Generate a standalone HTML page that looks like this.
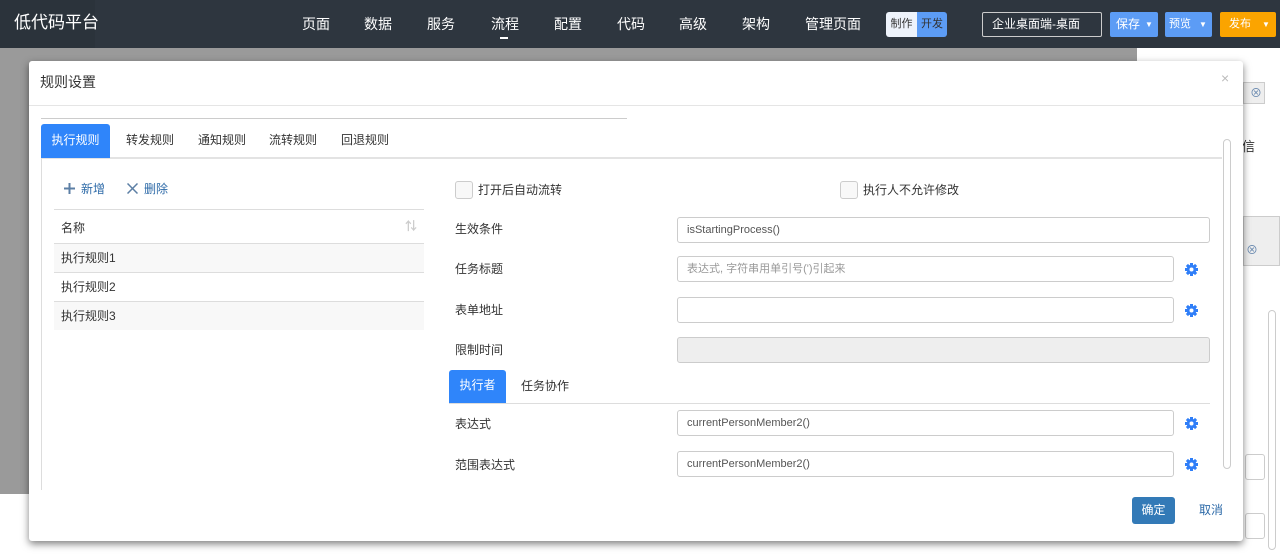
<!DOCTYPE html>
<html><head><meta charset="utf-8"><style>
*{box-sizing:border-box;margin:0;padding:0}
body{width:1280px;height:556px;overflow:hidden;position:relative;background:#fff;font-family:"Liberation Sans","Noto Sans CJK SC",sans-serif;font-size:12px;color:#333;line-height:1.2}
.abs{position:absolute;white-space:nowrap}
.top{left:0;top:0;width:1280px;height:48px;background:#2e363f}
.logo{left:0;top:0;width:95px;height:48px;background:#2b333b;color:#fff;font-size:17px;line-height:46px;padding-left:14px}
.nav{top:0;color:#fff;font-size:14px;line-height:48px}
.gray{left:0;top:48px;width:1137px;height:446px;background:#9a9a9a}
.modal{left:29px;top:61px;width:1214px;height:480px;background:#fff;border-radius:3px;box-shadow:0 3px 8px rgba(0,0,0,.5)}
.inp{border:1px solid #ccc;border-radius:3px;height:26px;background:#fff;font-size:11px;line-height:24px;padding-left:9px;color:#555}
.cb{width:18px;height:18px;border:1px solid #ccc;border-radius:3px;background:#f8f8f8}
.g{position:absolute;width:13px;height:13px}
</style></head><body>
<svg width="0" height="0" style="position:absolute"><defs><g id="gear"><g fill="#2f7ef8"><rect x="5" y="0" width="3" height="13"/><rect x="0" y="5" width="13" height="3"/><rect x="5" y="0" width="3" height="13" transform="rotate(45 6.5 6.5)"/><rect x="5" y="0" width="3" height="13" transform="rotate(-45 6.5 6.5)"/><circle cx="6.5" cy="6.5" r="4.8"/></g><circle cx="6.5" cy="6.5" r="2" fill="#fff"/></g></defs></svg>
<div class="abs top"></div>
<div class="abs logo">低代码平台</div>
<div class="abs nav" style="left:302px">页面</div>
<div class="abs nav" style="left:364px">数据</div>
<div class="abs nav" style="left:427px">服务</div>
<div class="abs nav" style="left:491px">流程</div>
<div class="abs" style="left:500px;top:37px;width:8px;height:2px;background:#fff"></div>
<div class="abs nav" style="left:554px">配置</div>
<div class="abs nav" style="left:617px">代码</div>
<div class="abs nav" style="left:679px">高级</div>
<div class="abs nav" style="left:742px">架构</div>
<div class="abs nav" style="left:805px">管理页面</div>
<div class="abs" style="left:886px;top:12px;width:31px;height:25px;background:#eef3fb;border-radius:3px 0 0 3px;color:#333;font-size:11px;line-height:25px;text-align:center">制作</div>
<div class="abs" style="left:917px;top:12px;width:30px;height:25px;background:#5c9cf5;border-radius:0 3px 3px 0;color:#333;font-size:11px;line-height:25px;text-align:center">开发</div>
<div class="abs" style="left:982px;top:12px;width:120px;height:25px;border:1px solid #ccc;border-radius:2px;color:#fff;font-size:12px;line-height:23px;padding-left:9px">企业桌面端-桌面</div>
<div class="abs" style="left:1110px;top:12px;width:48px;height:25px;background:#5c9cf5;border-radius:2px;color:#fff;font-size:12px;line-height:25px;padding-left:6px">保存<span style="position:absolute;left:35px;font-size:8px">▼</span></div>
<div class="abs" style="left:1165px;top:12px;width:47px;height:25px;background:#5c9cf5;border-radius:2px;color:#fff;font-size:11px;line-height:25px;padding-left:4px">预览<span style="position:absolute;left:34px;font-size:8px">▼</span></div>
<div class="abs" style="left:1220px;top:12px;width:56px;height:25px;background:#fba400;border-radius:2px;color:#fff;font-size:11px;line-height:25px;padding-left:9px">发布<span style="position:absolute;left:42px;font-size:8px">▼</span></div>
<div class="abs gray"></div>
<div class="abs" style="left:1243px;top:82px;width:22px;height:22px;border:1px solid #ccc;background:#eee;color:#6a8ab0;font-size:12px;line-height:20px;text-align:right;padding-right:2px">⊗</div>
<div class="abs" style="left:1242px;top:139px;font-size:13px">信</div>
<div class="abs" style="left:1243px;top:216px;width:37px;height:50px;border:1px solid #ccc;background:#eee;color:#6a8ab0;font-size:12px;padding-top:26px;padding-left:2px">⊗</div>
<div class="abs" style="left:1245px;top:454px;width:20px;height:26px;border:1px solid #ccc;border-radius:3px"></div>
<div class="abs" style="left:1245px;top:513px;width:20px;height:26px;border:1px solid #ccc;border-radius:3px"></div>
<div class="abs" style="left:1268px;top:310px;width:8px;height:240px;border:1px solid #ccc;border-radius:4px"></div>

<div class="abs modal"></div>
<div class="abs" style="left:40px;top:74px;font-size:14px;color:#333">规则设置</div>
<div class="abs" style="left:1221px;top:70px;font-size:14px;color:#bbb">×</div>
<div class="abs" style="left:29px;top:105px;width:1214px;height:1px;background:#e5e5e5"></div>
<div class="abs" style="left:41px;top:118px;width:586px;height:1px;background:#ccc"></div>
<div class="abs" style="left:41px;top:157px;width:1181px;height:2px;background:#e3e3e3"></div>
<div class="abs" style="left:41px;top:124px;width:69px;height:34px;background:#2f85fa;border-radius:3px 3px 0 0;color:#fff;line-height:32px;text-align:center">执行规则</div>
<div class="abs" style="left:126px;top:133px">转发规则</div>
<div class="abs" style="left:198px;top:133px">通知规则</div>
<div class="abs" style="left:269px;top:133px">流转规则</div>
<div class="abs" style="left:341px;top:133px">回退规则</div>
<div class="abs" style="left:41px;top:158px;width:1px;height:332px;background:#ddd"></div>
<div class="abs" style="left:1223px;top:139px;width:8px;height:330px;border:1px solid #ccc;border-radius:4px"></div>

<svg class="abs" style="left:64px;top:183px" width="11" height="11"><path d="M5.5 0V11M0 5.5H11" stroke="#5c7fa5" stroke-width="2"/></svg>
<div class="abs" style="left:81px;top:182px;color:#2d6aa8">新增</div>
<svg class="abs" style="left:127px;top:183px" width="11" height="11"><path d="M0.5 0.5L10.5 10.5M10.5 0.5L0.5 10.5" stroke="#5c7fa5" stroke-width="1.5"/></svg>
<div class="abs" style="left:144px;top:182px;color:#2d6aa8">删除</div>
<div class="abs" style="left:54px;top:209px;width:370px;height:1px;background:#ddd"></div>
<div class="abs" style="left:61px;top:221px">名称</div>
<div class="abs" style="left:405px;top:219px;color:#ccc;font-size:12px;font-weight:bold">⇅</div>
<div class="abs" style="left:54px;top:243px;width:370px;height:30px;background:#f8f8f8;border-top:1px solid #ddd;padding:7px 7px">执行规则1</div>
<div class="abs" style="left:54px;top:272px;width:370px;height:30px;background:#fff;border-top:1px solid #ddd;padding:7px 7px">执行规则2</div>
<div class="abs" style="left:54px;top:301px;width:370px;height:29px;background:#f8f8f8;border-top:1px solid #ddd;padding:7px 7px">执行规则3</div>

<div class="abs cb" style="left:455px;top:181px"></div>
<div class="abs" style="left:478px;top:183px">打开后自动流转</div>
<div class="abs cb" style="left:840px;top:181px"></div>
<div class="abs" style="left:863px;top:183px">执行人不允许修改</div>

<div class="abs" style="left:455px;top:222px">生效条件</div>
<div class="abs inp" style="left:677px;top:217px;width:533px">isStartingProcess()</div>
<div class="abs" style="left:455px;top:262px">任务标题</div>
<div class="abs inp" style="left:677px;top:256px;width:497px;color:#999">表达式, 字符串用单引号(')引起来</div>
<svg class="g" style="left:1185px;top:263px"><use href="#gear"/></svg>
<div class="abs" style="left:455px;top:303px">表单地址</div>
<div class="abs inp" style="left:677px;top:297px;width:497px"></div>
<svg class="g" style="left:1185px;top:304px"><use href="#gear"/></svg>
<div class="abs" style="left:455px;top:343px">限制时间</div>
<div class="abs inp" style="left:677px;top:337px;width:533px;background:#eee"></div>

<div class="abs" style="left:449px;top:370px;width:57px;height:33px;background:#2f85fa;border-radius:3px 3px 0 0;color:#fff;line-height:31px;text-align:center">执行者</div>
<div class="abs" style="left:521px;top:379px">任务协作</div>
<div class="abs" style="left:449px;top:403px;width:761px;height:1px;background:#ddd"></div>
<div class="abs" style="left:455px;top:417px">表达式</div>
<div class="abs inp" style="left:677px;top:410px;width:497px">currentPersonMember2()</div>
<svg class="g" style="left:1185px;top:417px"><use href="#gear"/></svg>
<div class="abs" style="left:455px;top:458px">范围表达式</div>
<div class="abs inp" style="left:677px;top:451px;width:497px">currentPersonMember2()</div>
<svg class="g" style="left:1185px;top:458px"><use href="#gear"/></svg>

<div class="abs" style="left:1132px;top:497px;width:43px;height:27px;background:#337ab7;border-radius:3px;color:#fff;line-height:26px;text-align:center">确定</div>
<div class="abs" style="left:1199px;top:503px;color:#2d6aa8">取消</div>
</body></html>
